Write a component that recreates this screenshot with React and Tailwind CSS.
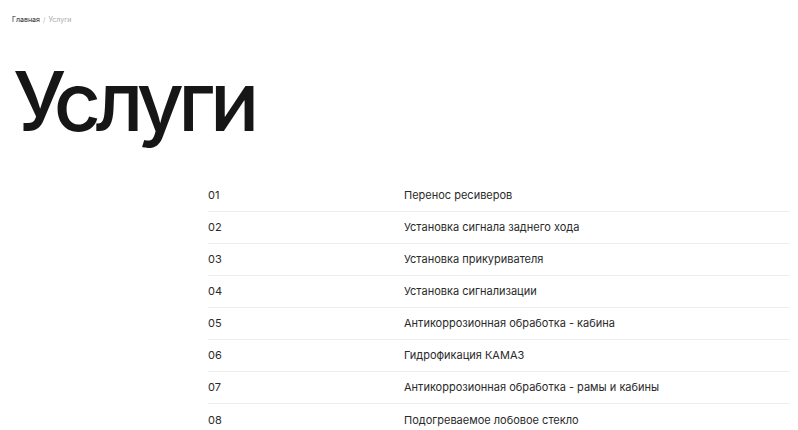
export default function App() {
  const items = [
    "Перенос ресиверов",
    "Установка сигнала заднего хода",
    "Установка прикуривателя",
    "Установка сигнализации",
    "Антикоррозионная обработка - кабина",
    "Гидрофикация КАМАЗ",
    "Антикоррозионная обработка - рамы и кабины",
    "Подогреваемое лобовое стекло",
  ];
  return (
    <div className="w-[798px] h-[430px] bg-white overflow-hidden text-[#1a1a1a]" style={{ fontFamily: "Inter, 'Noto Sans', sans-serif" }}>
      <div className="pl-[12px] pt-[15px] text-[7px] leading-[10px] flex gap-[3px]">
        <span className="text-[#222]">Главная</span>
        <span className="text-[#bbb]">/</span>
        <span className="text-[#aaa]">Услуги</span>
      </div>
      <h1 className="pl-[13px] mt-[32px] text-[82px] leading-[90px] font-medium tracking-[-5.5px] text-[#161616]">Услуги</h1>
      <div className="ml-[208px] w-[582px] mt-[33px]">
        {items.map((t, i) => (
          <div key={i} className={"flex items-center h-[32px] text-[11px] text-[#2a2a2a] " + (i < items.length - 1 ? "border-b border-[#eeeeee]" : "")}>
            <span className="w-[196px]">{String(i + 1).padStart(2, "0")}</span>
            <span>{t}</span>
          </div>
        ))}
      </div>
    </div>
  );
}
